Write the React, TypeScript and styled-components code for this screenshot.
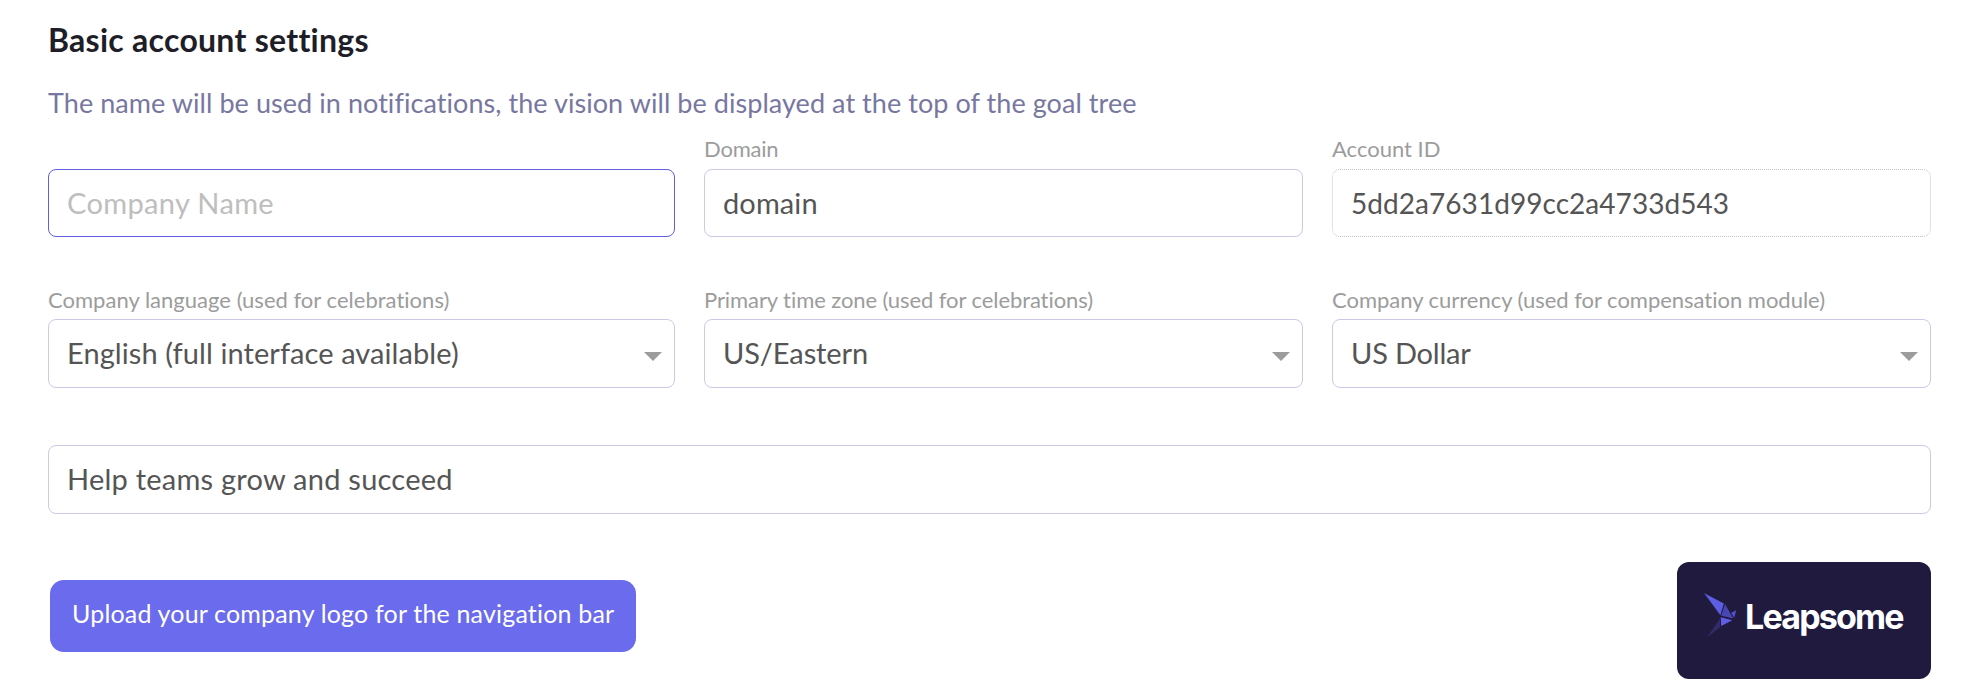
import React from 'react';
import styled, { createGlobalStyle } from 'styled-components';

const GlobalStyle = createGlobalStyle`
  *, *::before, *::after { box-sizing: border-box; }
  body {
    margin: 0;
    background: #fff;
    font-family: Lato, "Liberation Sans", sans-serif;
    font-variant-ligatures: none;
  }
`;

const Page = styled.main`
  width: 1976px;
  height: 686px;
  padding: 21px 45px 0 48px;
  overflow: hidden;
`;

const Heading = styled.h1`
  margin: 0;
  font-size: 32px;
  line-height: 38px;
  font-weight: 700;
  letter-spacing: 0.27px;
  color: #1e1e28;
`;

const Description = styled.p`
  margin: 28px 0 17px;
  font-size: 27px;
  line-height: 32px;
  letter-spacing: 0.06px;
  color: #77779f;
`;

const FieldRow = styled.div<{ $top?: number }>`
  display: grid;
  grid-template-columns: 627px 599px 599px;
  column-gap: 29px;
  align-items: end;
  margin-top: ${(p) => p.$top ?? 0}px;
`;

const Field = styled.div`
  display: flex;
  flex-direction: column;
`;

const Label = styled.span<{ $gap: number; $spacing?: number }>`
  margin-bottom: ${(p) => p.$gap}px;
  font-size: 22px;
  line-height: 26px;
  letter-spacing: ${(p) => p.$spacing ?? 0}px;
  color: #9c9c9c;
  white-space: nowrap;
`;

type BoxKind = 'normal' | 'focused' | 'readonly';

const borders: Record<BoxKind, string> = {
  normal: '1px solid #cbc9e6',
  focused: '1px solid #5f5fdf',
  readonly: '1px dotted #c4c4c4',
};

const ControlBox = styled.div<{ $kind?: BoxKind; $height?: number }>`
  display: flex;
  align-items: center;
  justify-content: space-between;
  height: ${(p) => p.$height ?? 69}px;
  padding: 0 12px 0 18px;
  border: ${(p) => borders[p.$kind ?? 'normal']};
  border-radius: 8px;
  background: #fff;
`;

const Value = styled.span<{ $placeholder?: boolean; $size?: number; $spacing?: number }>`
  padding-bottom: 1px;
  font-size: ${(p) => p.$size ?? 29}px;
  line-height: 36px;
  letter-spacing: ${(p) => p.$spacing ?? 0}px;
  color: ${(p) => (p.$placeholder ? '#bebebe' : '#555')};
  white-space: nowrap;
`;

const Arrow = styled.span`
  width: 0;
  height: 0;
  margin-top: 6px;
  border: solid transparent;
  border-width: 9px 9px 0;
  border-top-color: #9c9c9c;
`;

const Vision = styled.div`
  margin-top: 57px;
`;

const Footer = styled.div`
  display: flex;
  align-items: flex-start;
  justify-content: space-between;
  margin-top: 48px;
  padding-left: 2px;
`;

const UploadButton = styled.button`
  width: 586px;
  height: 72px;
  margin: 18px 0 0;
  padding: 0 0 7px 22px;
  border: 0;
  border-radius: 14px;
  background: #6b6bee;
  color: #fff;
  font-family: inherit;
  font-size: 25px;
  line-height: 30px;
  letter-spacing: 0.18px;
  text-align: left;
  white-space: nowrap;
`;

const LogoCard = styled.div`
  display: flex;
  align-items: center;
  width: 254px;
  height: 117px;
  padding-left: 26px;
  border-radius: 12px;
  background: #201a3f;
`;

const Bird = styled.svg`
  flex: none;
  width: 34px;
  height: 46px;
  margin-bottom: 12px;
`;

const BrandName = styled.span`
  margin: 0 0 8px 8px;
  font-family: Inter, sans-serif;
  font-size: 34px;
  line-height: 42px;
  font-weight: 700;
  letter-spacing: -1.8px;
  color: #fff;
`;

function Select({ label, value, labelSpacing, spacing }: {
  label: string;
  value: string;
  labelSpacing?: number;
  spacing?: number;
}) {
  return (
    <Field>
      <Label $gap={6} $spacing={labelSpacing}>{label}</Label>
      <ControlBox>
        <Value $spacing={spacing}>{value}</Value>
        <Arrow />
      </ControlBox>
    </Field>
  );
}

export default function App() {
  return (
    <>
      <GlobalStyle />
      <Page>
        <Heading>Basic account settings</Heading>
        <Description>
          The name will be used in notifications, the vision will be displayed at the top of the goal tree
        </Description>
        <FieldRow>
          <Field>
            <ControlBox $kind="focused" $height={68}>
              <Value $placeholder $spacing={0.35}>Company Name</Value>
            </ControlBox>
          </Field>
          <Field>
            <Label $gap={7} $spacing={-0.2}>Domain</Label>
            <ControlBox $height={68}>
              <Value $spacing={0.1}>domain</Value>
            </ControlBox>
          </Field>
          <Field>
            <Label $gap={7}>Account ID</Label>
            <ControlBox $kind="readonly" $height={68}>
              <Value $size={28} $spacing={0.05}>5dd2a7631d99cc2a4733d543</Value>
            </ControlBox>
          </Field>
        </FieldRow>
        <FieldRow $top={50}>
          <Select label="Company language (used for celebrations)" value="English (full interface available)" labelSpacing={0.02} spacing={0.08} />
          <Select label="Primary time zone (used for celebrations)" value="US/Eastern" labelSpacing={-0.08} spacing={-0.1} />
          <Select label="Company currency (used for compensation module)" value="US Dollar" labelSpacing={-0.02} spacing={-0.2} />
        </FieldRow>
        <Vision>
          <ControlBox>
            <Value $spacing={0.24}>Help teams grow and succeed</Value>
          </ControlBox>
        </Vision>
        <Footer>
          <UploadButton type="button">Upload your company logo for the navigation bar</UploadButton>
          <LogoCard>
            <Bird viewBox="0 0 34 46" aria-hidden="true">
              <path d="M1 1 20.8 11.6 17.4 23.2Z" fill="#5d5de2" />
              <path d="M22 12 30.3 26.4 18.2 23.8Z" fill="#4846b0" />
              <path d="M28.2 20.8 33.2 18.2 31.2 26Z" fill="#5351cb" />
              <path d="M17.7 25.2 29.3 28.2 18.2 34Z" fill="#5f5fe6" />
              <path d="M17 26.5V35.2L4 45.4Z" fill="#312b69" />
            </Bird>
            <BrandName>Leapsome</BrandName>
          </LogoCard>
        </Footer>
      </Page>
    </>
  );
}
